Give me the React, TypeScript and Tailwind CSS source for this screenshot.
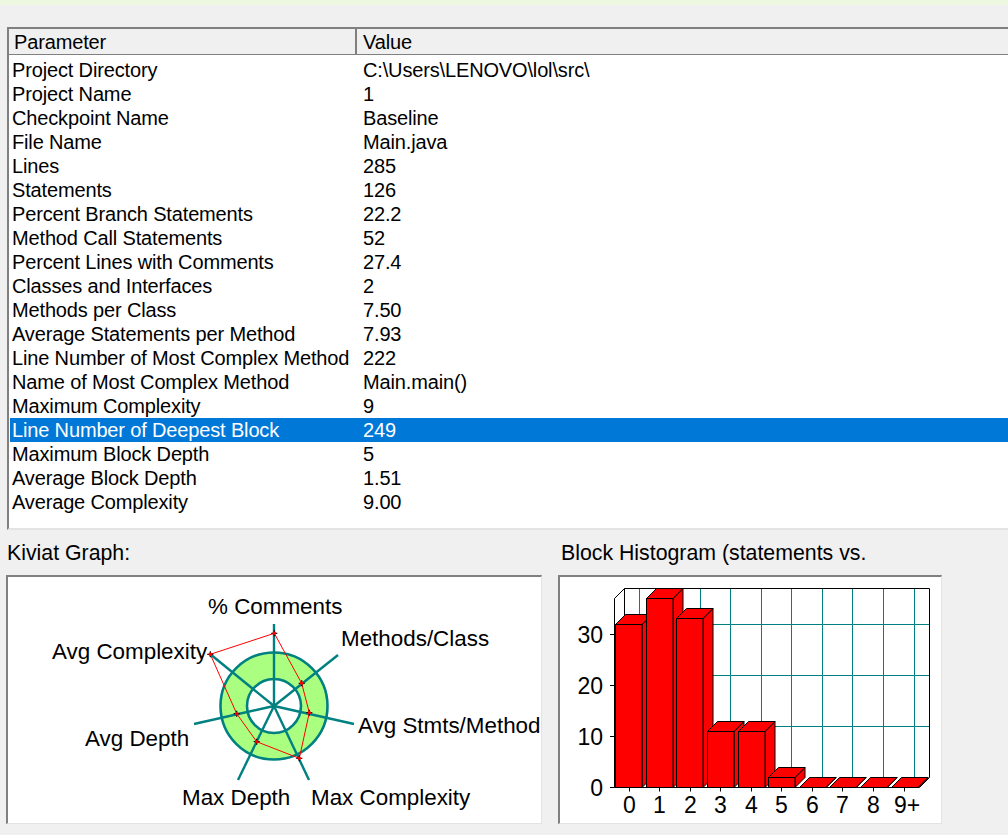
import React from 'react';

const rows: [string, string][] = [
    ['Project Directory', 'C:\\Users\\LENOVO\\lol\\src\\'],
    ['Project Name', '1'],
    ['Checkpoint Name', 'Baseline'],
    ['File Name', 'Main.java'],
    ['Lines', '285'],
    ['Statements', '126'],
    ['Percent Branch Statements', '22.2'],
    ['Method Call Statements', '52'],
    ['Percent Lines with Comments', '27.4'],
    ['Classes and Interfaces', '2'],
    ['Methods per Class', '7.50'],
    ['Average Statements per Method', '7.93'],
    ['Line Number of Most Complex Method', '222'],
    ['Name of Most Complex Method', 'Main.main()'],
    ['Maximum Complexity', '9'],
    ['Line Number of Deepest Block', '249'],
    ['Maximum Block Depth', '5'],
    ['Average Block Depth', '1.51'],
    ['Average Complexity', '9.00'],
];

const TEAL = '#008080';
const center = { x: 274, y: 706 };
const spokes = [
    [274, 624],
    [338, 655],
    [354, 724],
    [309, 780],
    [238, 780],
    [194, 724],
    [210, 654],
];
const marks = [
    [274.3, 633.3],
    [301.7, 683.3],
    [309.3, 712.7],
    [299.3, 758.3],
    [256.7, 741.7],
    [236.7, 713.7],
    [210.3, 654.3],
];
const kiviatLabels: [string, number, number][] = [
    ['% Comments', 208, 614],
    ['Methods/Class', 341, 646],
    ['Avg Stmts/Method', 358, 733],
    ['Max Complexity', 311, 805],
    ['Max Depth', 182, 805],
    ['Avg Depth', 85, 746],
    ['Avg Complexity', 52, 659],
];

const KiviatGraph = () => (
    <svg viewBox="8 577 532 246" width="532" height="246" className="block">
        <circle cx={center.x} cy={center.y} r="53.5" fill="#aaff80" stroke={TEAL} strokeWidth="2.6" />
        <circle cx={center.x} cy={center.y} r="27" fill="#fff" stroke={TEAL} strokeWidth="2.6" />
        {spokes.map(([x, y]) => (
            <line key={`${x}-${y}`} x1={center.x} y1={center.y} x2={x} y2={y} stroke={TEAL} strokeWidth="2.4" />
        ))}
        <polygon points={marks.map((m) => m.join(',')).join(' ')} fill="none" stroke="#ff0000" strokeWidth="1" />
        {marks.map(([x, y]) => (
            <g key={`${x}-${y}`}>
                <path d={`M${x - 3} ${y}H${x + 3}M${x} ${y - 3}V${y + 3}`} stroke="#000" strokeWidth="1.2" />
                <circle cx={x} cy={y} r="1.8" fill="#ff0000" />
            </g>
        ))}
        {kiviatLabels.map(([t, x, y]) => (
            <text key={t} x={x} y={y} fontSize="22.4" fill="#000">{t}</text>
        ))}
    </svg>
);

const barValues = [624.3, 598.3, 618.3, 731.3, 731.3, 777.3, 787.3, 787.3, 787.3, 787.3];
const gridX = [639.5, 670.5, 700.5, 730.5, 761.5, 791.5, 822.5, 852.5, 883.5, 914.5];
const gridY = [624.5, 675.5, 726.5];
const tickX = [629.5, 659.5, 690.5, 720.5, 751.5, 781.5, 812.5, 842.5, 873.5, 904.5];
const tickNames = ['0', '1', '2', '3', '4', '5', '6', '7', '8', '9+'];
const tickY: [string, number][] = [['0', 787.5], ['10', 736.5], ['20', 685.5], ['30', 634.5]];
const BASE = 787.5;
const D = 10;

const Histogram = () => (
    <svg viewBox="560 577 380 246" width="380" height="246" className="block">
        {gridX.map((x) => (
            <line key={x} x1={x} y1="588.5" x2={x} y2="777.5" stroke={TEAL} strokeWidth="1" />
        ))}
        {gridY.map((y) => (
            <line key={y} x1="624.5" y1={y} x2="929.5" y2={y} stroke={TEAL} strokeWidth="1" />
        ))}
        <path d="M614.5 598.5L624.5 588.5H929.5V777.5L919.5 787.5M614.5 598.5V787.5H919.5" fill="none" stroke="#000" strokeWidth="1" />
        <path d="M614.5 598.5L624.5 588.5V624.5H614.5Z" fill="#fff" stroke="#000" strokeWidth="1" />
        {barValues.map((top, i) => {
            const l = Math.floor(615.7 + 30.6 * i) + 0.5;
            const r = l + 26.5;
            const t = Math.round(top) + 0.5;
            return (
                <g key={i} stroke="#000" strokeWidth="1" fill="#ff0000">
                    <path d={`M${r} ${BASE}L${r + D} ${BASE - D}V${t - D}L${r} ${t}Z`} />
                    <path d={`M${l} ${t}L${l + D} ${t - D}H${r + D}L${r} ${t}Z`} />
                    <rect x={l} y={t} width={r - l} height={BASE - t} />
                </g>
            );
        })}
        {tickX.map((x, i) => (
            <g key={x}>
                <line x1={x} y1="787.5" x2={x} y2="791.5" stroke="#000" strokeWidth="1" />
                <text x={i === 9 ? x + 2.5 : x} y="813" fontSize="23" textAnchor="middle" fill="#000">{tickNames[i]}</text>
            </g>
        ))}
        {tickY.map(([t, y]) => (
            <g key={t}>
                <line x1="610" y1={y} x2="614.5" y2={y} stroke="#000" strokeWidth="1" />
                <text x="603" y={y + 8.5} fontSize="23" textAnchor="end" fill="#000">{t}</text>
            </g>
        ))}
    </svg>
);

export default function App() {
    return (
        <div className="w-[1008px] h-[835px] overflow-hidden bg-[#f0f0f0] text-[20px] tracking-[-0.15px] text-black [font-family:'Liberation_Sans',Arial,sans-serif]">
            <div className="h-[5px] bg-[#eef7e0]" />
            <div className="ml-[7px] mt-[22px] h-[503px] bg-white border-l-2 border-t-2 border-b-2 border-l-[#808080] border-t-[#808080] border-b-[#e3e3e3]">
                <div className="flex h-[26px] leading-[26px] bg-[#f0f0f0] border-b border-[#808080]">
                    <div className="w-[348px] pl-[5px] border-r-2 border-[#808080]">Parameter</div>
                    <div className="pl-[6px]">Value</div>
                </div>
                <div className="pt-[3px] pl-[1px]">
                    {rows.map(([name, value]) => (
                        <div
                            key={name}
                            className={`flex h-[24px] leading-[24px] pl-[2px] ${name === 'Line Number of Deepest Block' ? 'bg-[#0078d7] text-white' : ''}`}
                        >
                            <div className="w-[351px]">{name}</div>
                            <div>{value}</div>
                        </div>
                    ))}
                </div>
            </div>
            <div className="flex ml-[6px] mt-[10px] text-[21.3px] tracking-normal">
                <div className="w-[536px]">
                    <div className="h-[35px] leading-[27px] pl-[1px]">Kiviat Graph:</div>
                    <div className="w-[536px] h-[249px] bg-white border-l-2 border-t-2 border-b border-r border-l-[#808080] border-t-[#808080] border-b-[#e3e3e3] border-r-[#e3e3e3]">
                        <KiviatGraph />
                    </div>
                </div>
                <div className="ml-[16px] w-[384px]">
                    <div className="h-[35px] leading-[27px] pl-[3px] whitespace-nowrap">Block Histogram (statements vs.</div>
                    <div className="w-[384px] h-[249px] bg-white border-l-2 border-t-2 border-b border-r border-l-[#808080] border-t-[#808080] border-b-[#e3e3e3] border-r-[#e3e3e3]">
                        <Histogram />
                    </div>
                </div>
            </div>
        </div>
    );
}
